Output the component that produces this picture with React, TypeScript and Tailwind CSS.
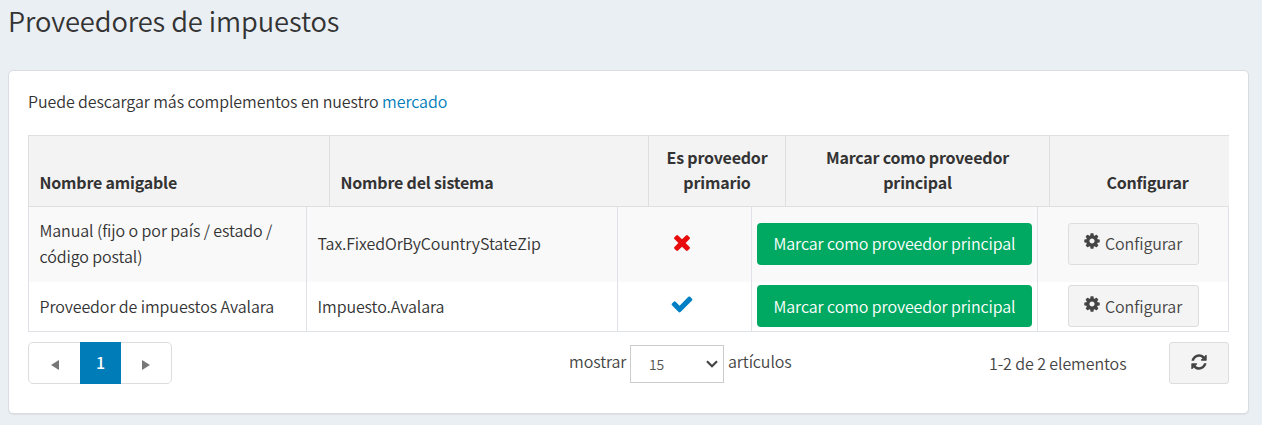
import React from "react";

const ICONS = {
  times:
    "M1298 1322q0 40-28 68l-136 136q-28 28-68 28t-68-28L704 1232l-294 294q-28 28-68 28t-68-28l-136-136q-28-28-28-68t28-68l294-294-294-294q-28-28-28-68t28-68l136-136q28-28 68-28t68 28l294 294 294-294q28-28 68-28t68 28l136 136q28 28 28 68t-28 68l-294 294 294 294q28 28 28 68z",
  check:
    "M1671 566q0 40-28 68l-724 724-136 136q-28 28-68 28t-68-28l-136-136-362-362q-28-28-28-68t28-68l136-136q28-28 68-28t68 28l294 295 656-657q28-28 68-28t68 28l136 136q28 28 28 68z",
  cog: "M1152 896q0-106-75-181t-181-75-181 75-75 181 75 181 181 75 181-75 75-181zm512-109v222q0 12-8 23t-20 13l-185 28q-19 54-39 91 35 50 107 138 10 12 10 25t-9 23q-27 37-99 108t-94 71q-12 0-26-9l-138-108q-44 23-91 38-16 136-29 186-7 28-36 28h-222q-14 0-24.500-8.500t-11.500-21.500l-28-184q-49-16-90-37l-141 107q-10 9-25 9-14 0-25-11-126-114-165-168-7-10-7-23 0-12 8-23 15-21 51-66.500t54-70.500q-27-50-41-99l-183-27q-13-2-21-12.500t-8-23.500v-222q0-12 8-23t19-13l186-28q14-46 39-92-40-57-107-138-10-12-10-24 0-10 9-23 26-36 98.500-107.500t94.500-71.500q13 0 26 10l138 107q44-23 91-38 16-136 29-186 7-28 36-28h222q14 0 24.500 8.500t11.500 21.500l28 184q49 16 90 37l142-107q9-9 24-9 13 0 25 10 129 119 165 170 7 8 7 22 0 12-8 23-15 21-51 66.500t-54 70.500q26 50 41 98l183 28q13 2 21 12.500t8 23.500z",
  refresh:
    "M1639 1056q0 5-1 7-64 268-268 434.500t-478 166.500q-146 0-282.500-55t-243.500-157l-129 129q-19 19-45 19t-45-19-19-45v-448q0-26 19-45t45-19h448q26 0 45 19t19 45-19 45l-137 137q71 66 161 102t187 36q134 0 250-65t186-179q11-17 53-117 8-23 30-23h192q13 0 22.500 9.500t9.500 22.500zm25-800v448q0 26-19 45t-45 19h-448q-26 0-45-19t-19-45 19-45l138-138q-148-137-349-137-134 0-250 65t-186 179q-11 17-53 117-8 23-30 23h-199q-13 0-22.500-9.500t-9.500-22.500v-7q65-268 270-434.500t480-166.500q146 0 284 55.500t245 156.500l130-129q19-19 45-19t45 19 19 45z",
};

function Icon({ name, className, viewBox = "0 0 1792 1792" }: { name: keyof typeof ICONS; className: string; viewBox?: string }) {
  return (
    <svg viewBox={viewBox} className={className} fill="currentColor" aria-hidden="true">
      <path d={ICONS[name]} />
    </svg>
  );
}

function HeaderCell({ className, children }: { className: string; children: React.ReactNode }) {
  return (
    <div className={`flex shrink-0 flex-col justify-end border-l border-[#dfdfdf] pb-[11px] ${className}`}>
      {children}
    </div>
  );
}

function Row({ name, system, primary, className }: { name: React.ReactNode; system: string; primary: boolean; className: string }) {
  const textOffset = primary ? "pb-px" : "pb-[3px]";
  const buttonOffset = primary ? "pt-px" : "pb-px";
  return (
    <div className={`flex border-r border-[#dee2e6] ${className}`}>
      <div className={`flex w-[278px] shrink-0 items-center border-l border-[#dee2e6] pl-[10.5px] ${textOffset}`}>{name}</div>
      <div className={`flex w-[311px] shrink-0 items-center border-l border-[#dee2e6] pl-[10.5px] ${textOffset}`}>{system}</div>
      <div className="flex w-[134px] shrink-0 items-center border-l border-[#dee2e6] pl-[51.5px]">
        {primary ? (
          <Icon name="check" className="mb-[6px] size-6 text-[#007fc5]" />
        ) : (
          <Icon name="times" viewBox="-192 64 1792 1792" className="mb-1 size-6 text-[#e80c0c]" />
        )}
      </div>
      <div className="flex w-[286px] shrink-0 items-center justify-center border-l border-[#dee2e6] pb-[2px]">
        <button className={`h-[42px] w-[275px] rounded-[4px] bg-[#00a961] text-white ${buttonOffset}`}>Marcar como proveedor principal</button>
      </div>
      <div className="flex w-[191px] shrink-0 items-center border-l border-[#dee2e6] pb-[2px] pl-[30px]">
        <button className={`flex h-[42px] w-[131px] items-center rounded-[3px] border border-[#dddddd] bg-[#f4f4f4] pl-[14px] text-[#444444] ${buttonOffset}`}>
          <Icon name="cog" className="mr-[4px] mb-[4px] size-[18px]" />
          Configurar
        </button>
      </div>
    </div>
  );
}

export default function App() {
  return (
    <div className="h-[425px] w-[1262px] overflow-hidden bg-[#eaeff4] px-2 font-['Noto_Sans_CJK_SC',sans-serif] text-[16px] leading-[26px] font-[350] tracking-[-0.09px] text-[#333333]">
      <h1 className="h-[70px] text-[27.3px] leading-[40px]">Proveedores de impuestos</h1>
      <main className="h-[344px] w-[1241px] rounded-[5px] border border-[#d9dde1] bg-white pt-[17px] pr-[18px] pl-[19px] shadow-[0_1px_1px_rgba(0,0,0,0.06)]">
        <p className="h-[47px]">
          Puede descargar más complementos en nuestro <a className="text-[#007db8]">mercado</a>
        </p>
        <div className="w-[1201px]">
          <div className="flex h-[72px] border-y border-[#dfdfdf] bg-[#f3f3f3] leading-[25px] font-bold tracking-[-0.2px]">
            <HeaderCell className="w-[301px] pl-[10.5px]">Nombre amigable</HeaderCell>
            <HeaderCell className="w-[319px] pl-[10.5px]">Nombre del sistema</HeaderCell>
            <HeaderCell className="w-[137px] items-center">
              <span>Es proveedor</span>
              <span>primario</span>
            </HeaderCell>
            <HeaderCell className="w-[264px] items-center">
              <span>Marcar como proveedor</span>
              <span>principal</span>
            </HeaderCell>
            <HeaderCell className="w-[180px] items-center pl-[16px]">Configurar</HeaderCell>
          </div>
          <Row
            name={<span>Manual (fijo o por país / estado /<br />código postal)</span>}
            system="Tax.FixedOrByCountryStateZip"
            primary={false}
            className="h-[75px] bg-[#f9f9f9]"
          />
          <Row name="Proveedor de impuestos Avalara" system="Impuesto.Avalara" primary className="h-[50px] border-b" />
        </div>
        <footer className="flex h-[52px] w-[1201px] items-start pt-[10px]">
          <nav className="flex h-[42px] w-[144px] items-center rounded-[5px] border border-[#dddddd] text-[#777777]">
            <span className="flex w-[51px] justify-center">
              <svg viewBox="0 0 8 10" className="mt-[3px] h-[10px] w-2" fill="currentColor"><path d="M8 0v10L0 5z" /></svg>
            </span>
            <span className="flex h-[42px] w-[41px] shrink-0 items-center justify-center bg-[#007db8] pb-[3px] font-medium text-white">1</span>
            <span className="flex flex-1 justify-center">
              <svg viewBox="0 0 8 10" className="mt-[3px] h-[10px] w-2" fill="currentColor"><path d="M0 0v10l8-5z" /></svg>
            </span>
          </nav>
          <span className="ml-[397px] w-[61px] pt-[6px] text-[#444444]">mostrar</span>
          <div className="mt-[3px] flex h-[38px] w-[94px] items-center justify-between border border-[#cccccc] pr-[5px] pl-[18px] text-[14px] text-[#555555]">
            15
            <svg viewBox="0 0 12 8" className="h-2 w-3" fill="none" stroke="#444444" strokeWidth="2.2"><path d="M1 1.200l5 5 5-5" /></svg>
          </div>
          <span className="ml-[4px] pt-[6px] text-[#444444]">artículos</span>
          <span className="ml-auto w-[180px] pt-[8px] text-[#444444]">1-2 de 2 elementos</span>
          <button className="flex h-[42px] w-[60px] items-center justify-center rounded-[3px] border border-[#dddddd] bg-[#f4f4f4] pb-[3px] text-[#444444]">
            <Icon name="refresh" className="size-[18px]" />
          </button>
        </footer>
      </main>
    </div>
  );
}
